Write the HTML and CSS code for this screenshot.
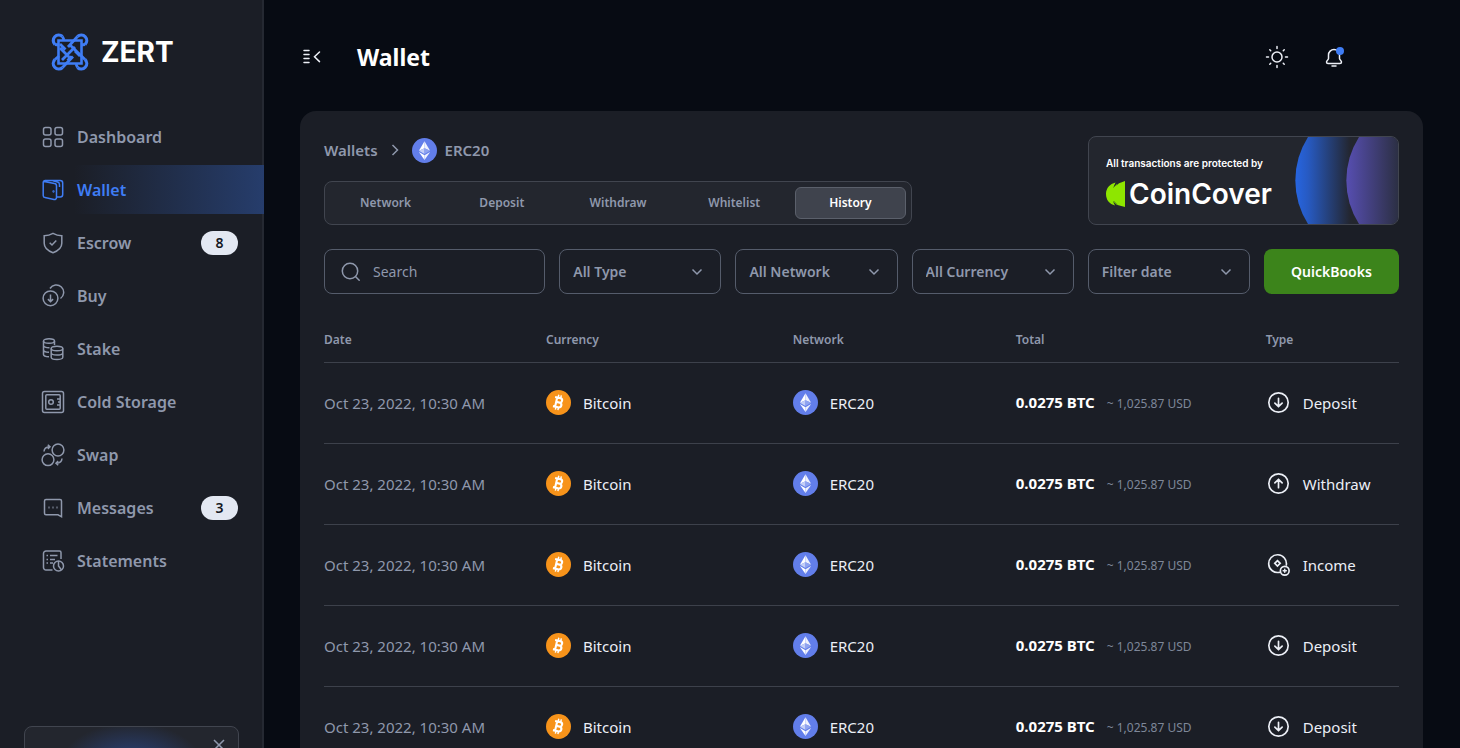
FILE: index.html
```html
<!DOCTYPE html>
<html lang="en">
<head>
<meta charset="utf-8">
<meta name="viewport" content="width=device-width, initial-scale=1">
<title>Zert – Wallet</title>
<link rel="stylesheet" href="styles.css">
</head>
<body>
<svg class="defs" aria-hidden="true">
  <defs>
    <symbol id="eth" viewBox="0 0 24 24">
      <circle cx="12" cy="12" r="12" fill="#627eea"/>
      <path d="M12 3 6.600 12.200 12 9.800z" fill="#fff"/><path d="M12 3v6.800l5.400 2.400z" fill="#eef1fd"/>
      <path d="M12 9.800 6.600 12.200 12 15.400z" fill="#c3cef7"/><path d="M12 9.800v5.600l5.400-3.200z" fill="#8fa3f0"/>
      <path d="M6.600 13.400 12 21v-4.400z" fill="#fff"/><path d="M12 16.600V21l5.400-7.600z" fill="#eef1fd"/>
    </symbol>
    <symbol id="btc" viewBox="0 0 24 24">
      <circle cx="12" cy="12" r="12" fill="#f7931a"/>
      <g transform="rotate(13 12 12)" fill="none" stroke="#fff">
        <path d="M7.600 7.500h5.200a2.200 2.200 0 0 1 0 4.400H9.800h3.600a2.400 2.400 0 0 1 0 4.700H7.600M9.700 7.500v9" stroke-width="2"/>
        <path d="M10.600 4.700v2.500M13.100 4.700v2.500M10.600 16.800v2.500M13.100 16.800v2.500" stroke-width="1.400"/>
      </g>
    </symbol>
    <symbol id="down" viewBox="0 0 24 24"><circle cx="12" cy="12" r="9.300"/><path d="M12 8v8m-3.500-3.400L12 16l3.500-3.400"/></symbol>
    <symbol id="up" viewBox="0 0 24 24"><circle cx="12" cy="12" r="9.300"/><path d="M12 16V8m-3.500 3.400L12 8l3.500 3.400"/></symbol>
    <symbol id="income" viewBox="0 0 24 24"><path d="M12.800 19.500A8.500 8.500 0 1 1 19.500 12.500"/><path d="m11 8.300 2.600 2.600-2.600 2.600-2.600-2.600z"/><circle cx="18" cy="18" r="4.200"/><path d="M18 16.500v3m-1.500-1.500h3" stroke-width="1.400"/></symbol>
  </defs>
</svg>
<div class="app">
  <aside class="sidebar">
    <a class="brand" href="#">
      <svg class="brand-mark" viewBox="0 0 40 40" aria-hidden="true">
        <path d="M8.500 8.500h23v23h-23z" stroke-width="2.600"/>
        <path d="M12.500 4.500A5.300 5.300 0 1 0 5 12.500M27.500 4.500A5.300 5.300 0 1 1 35 12.500M12.500 35.500A5.300 5.300 0 1 1 5 27.500M27.500 35.500A5.300 5.300 0 1 0 35 27.500" stroke-width="3.200"/>
        <path d="M5 12.500 9 13M12.500 4.500 14 8M27.500 4.500 18 15M35 12.500 31 13M5 27.500 9 24M12.500 35.500 23 24.500M35 27.500 20.500 13.500M27.500 35.500 26 32M10 12l5.500 5.500M10 16l9 9M25 15l-13 13M30 24l-5-5M17.500 28.500l4-4" stroke-width="2.800"/>
      </svg>
      <span>ZERT</span>
    </a>
    <nav class="nav" aria-label="Main">
      <a class="nav-item" href="#"><svg viewBox="0 0 24 24"><rect x="2.500" y="2.500" width="7.500" height="7.500" rx="2"/><rect x="14" y="2.500" width="7.500" height="7.500" rx="2"/><rect x="2.500" y="14" width="7.500" height="7.500" rx="2"/><rect x="14" y="14" width="7.500" height="7.500" rx="2"/></svg>Dashboard</a>
      <a class="nav-item active" href="#" aria-current="page"><svg viewBox="0 0 24 24"><path d="M3 3.400 13.500 5.600a2.400 2.400 0 0 1 2 2.400v11.500a2 2 0 0 1-2.500 2L4 19.600a2 2 0 0 1-1.800-2V4.500a2 2 0 0 1 2-2h15a2.500 2.500 0 0 1 2.500 2.500v11.500a2.500 2.500 0 0 1-2.500 2.500h-3.500M12 2.800l4.500 1.300a2.600 2.600 0 0 1 2 2.400V9"/><circle cx="12.500" cy="13.500" r=".4"/></svg>Wallet</a>
      <a class="nav-item" href="#"><svg viewBox="0 0 24 24"><path d="M12 2.400c3 1.700 5.700 2.300 8.800 2.400v7.500c0 4.700-3.300 7.500-8.800 9.400-5.500-1.900-8.800-4.700-8.800-9.400V4.800C6.300 4.700 9 4.100 12 2.400z"/><path d="m8.700 11.700 2.300 2.300 4.300-4.500"/></svg>Escrow<span class="badge">8</span></a>
      <a class="nav-item" href="#"><svg viewBox="0 0 24 24"><circle cx="9.500" cy="14.300" r="7.400"/><path d="M9.500 10.500v7m-2.600-2.400 2.600 2.600 2.600-2.600M9 4.500a7.400 7.400 0 1 1 10.500 10"/></svg>Buy</a>
      <a class="nav-item" href="#"><svg viewBox="0 0 24 24"><ellipse cx="8" cy="4" rx="5.500" ry="2.300"/><path d="M2.500 4v13.500c0 1.200 2.200 2.200 5.500 2.300M13.500 4v4M2.500 8.500c0 1.300 2.500 2.300 6 2.200M2.500 13c0 1.300 2.300 2.200 5.500 2.300"/><ellipse cx="16" cy="11.500" rx="5.800" ry="2.300"/><path d="M10.200 11.500v8.700c0 3 11.600 3 11.600 0v-8.700M10.200 15.800c0 3 11.600 3 11.600 0"/></svg>Stake</a>
      <a class="nav-item" href="#"><svg viewBox="0 0 24 24"><rect x="1.500" y="1.500" width="21" height="21" rx="2"/><rect x="4.800" y="4.800" width="14.400" height="14.400" rx="1"/><circle cx="10" cy="12" r="2.300"/><path d="M16 9h3M17 12h2M16 15h3"/></svg>Cold Storage</a>
      <a class="nav-item" href="#"><svg viewBox="0 0 24 24"><circle cx="17" cy="7" r="5.900"/><circle cx="7" cy="16.700" r="5.900"/><path d="M3 8.500C3.200 5.500 5 4 8.500 3.800M6.800 1.700 9 3.800 6.800 5.900M21 15.500c-.2 3-2 4.500-5.500 4.700m1.700-2.100-2.200 2.100 2.200 2.100"/></svg>Swap</a>
      <a class="nav-item" href="#"><svg viewBox="0 0 24 24"><path d="M3.500 5a1.500 1.500 0 0 1 1.500-1.500h14a1.500 1.500 0 0 1 1.500 1.500v15.800l-3.500-2H5a1.500 1.500 0 0 1-1.500-1.500z"/><path d="M7.500 11.500h1M11.500 11.500h1M15.500 11.500h1" stroke-width="1.800"/></svg>Messages<span class="badge">3</span></a>
      <a class="nav-item" href="#"><svg viewBox="0 0 24 24"><path d="M11.500 21H5a2.500 2.500 0 0 1-2.500-2.500v-14a2.500 2.500 0 0 1 2.500-2.500h13.500a1.500 1.500 0 0 1 1.500 1.500V10M5.500 6.500h1.500M9 6.500h7.500M5.500 10.500h1.500M9 10.500h5M5.500 14h1.500M9 14h3"/><circle cx="17.500" cy="17" r="5"/><path d="M17.500 12v5l3 4"/></svg>Statements</a>
    </nav>
    <section class="promo" aria-label="Announcement">
      <button class="promo-close" type="button" aria-label="Close"><svg viewBox="0 0 12 12"><path d="m1 1 10 10M11 1 1 11"/></svg></button>
    </section>
  </aside>

  <main class="main">
    <header class="topbar">
      <button class="icon-button" type="button" aria-label="Collapse menu"><svg class="menu-icon" viewBox="0 0 18 16"><path d="M1 1.500h5M1 5.500h5M1 9.500h5M1 13.500h5M16.500 3l-5 4.800 5 4.800"/></svg></button>
      <h1>Wallet</h1>
      <div class="actions">
        <button class="icon-button" type="button" aria-label="Light theme"><svg class="action-icon" viewBox="0 0 24 24"><circle cx="12" cy="12" r="5"/><path d="M12 1.500v2M12 20.500v2M1.500 12h2M20.500 12h2M4.800 4.800l.9.900M18.300 18.300l.9.900M4.800 19.200l.9-.9M18.300 5.700l.9-.9"/></svg></button>
        <button class="icon-button" type="button" aria-label="Notifications"><svg class="action-icon" viewBox="0 0 24 24"><path d="M12 4.500a5.500 5.500 0 0 0-5.500 5.500v3.500c0 1.500-2 2-2 3.500 0 1 .5 1.500 1.500 1.500h12c1 0 1.500-.5 1.500-1.500 0-1.500-2-2-2-3.500V10A5.500 5.500 0 0 0 12 4.500zM10 21h4"/><circle cx="18" cy="6" r="4" fill="#3f7df5" stroke="none"/></svg></button>
      </div>
    </header>

    <section class="card">
      <div class="card-head">
        <div class="card-nav">
          <nav class="crumbs" aria-label="Breadcrumb">
            <a href="#">Wallets</a>
            <svg class="crumb-arrow" viewBox="0 0 8 12"><path d="m1.500 1 5 5-5 5"/></svg>
            <a class="crumb-current" href="#"><svg class="coin"><use href="#eth"/></svg>ERC20</a>
          </nav>
          <div class="tabs" role="tablist">
            <button type="button" role="tab">Network</button>
            <button type="button" role="tab">Deposit</button>
            <button type="button" role="tab">Withdraw</button>
            <button type="button" role="tab">Whitelist</button>
            <button type="button" role="tab" class="selected" aria-selected="true">History</button>
          </div>
        </div>
        <aside class="cover">
          <div class="cover-text">
            <p>All transactions are protected by</p>
            <div class="cover-brand">
              <svg viewBox="0 0 19 26" aria-hidden="true"><path d="M9.500 1.500C4 3 0 7 0 13s3.500 10 9 11.500l-2-4 3.500 3 1 .5L19 26V0l-6 2.200-1.500 1.300-4 2.500z" fill="#8ee600"/><path d="M11 3 7.500 6.500M11 23.500 7.500 20" stroke="#4c8312"/></svg>
              <strong>CoinCover</strong>
            </div>
          </div>
          <svg class="cover-art" viewBox="0 0 104 87" aria-hidden="true">
            <defs>
              <linearGradient id="blue" gradientUnits="userSpaceOnUse" x1="0" x2="56" y1="0" y2="0"><stop offset="0" stop-color="#2666e4"/><stop offset=".25" stop-color="#275ac2"/><stop offset="1" stop-color="#232630"/></linearGradient>
              <linearGradient id="violet" gradientUnits="userSpaceOnUse" x1="51" x2="105" y1="0" y2="0"><stop offset="0" stop-color="#584fb4"/><stop offset="1" stop-color="#2b2f42"/></linearGradient>
            </defs>
            <path d="M14 0a81 81 0 0 0 0 87h44V0z" fill="url(#blue)"/>
            <path d="M65 0a81 81 0 0 0 0 87h40V0z" fill="url(#violet)"/>
          </svg>
        </aside>
      </div>

      <form class="filters">
        <label class="search"><svg viewBox="0 0 20 20"><circle cx="9" cy="9" r="7.700"/><path d="m14.700 14.700 3.500 3.500"/></svg><input type="search" placeholder="Search" aria-label="Search"></label>
        <label class="pick"><select aria-label="Type"><option>All Type</option></select><svg viewBox="0 0 12 8"><path d="m1.500 1.500 4.500 4.500 4.500-4.500"/></svg></label>
        <label class="pick"><select aria-label="Network"><option>All Network</option></select><svg viewBox="0 0 12 8"><path d="m1.500 1.500 4.500 4.500 4.500-4.500"/></svg></label>
        <label class="pick"><select aria-label="Currency"><option>All Currency</option></select><svg viewBox="0 0 12 8"><path d="m1.500 1.500 4.500 4.500 4.500-4.500"/></svg></label>
        <label class="pick"><select aria-label="Date"><option>Filter date</option></select><svg viewBox="0 0 12 8"><path d="m1.500 1.500 4.500 4.500 4.500-4.500"/></svg></label>
        <button class="primary" type="button">QuickBooks</button>
      </form>

      <table class="history">
        <colgroup><col class="c-date"><col class="c-currency"><col class="c-network"><col class="c-total"><col></colgroup>
        <thead><tr><th scope="col">Date</th><th scope="col">Currency</th><th scope="col">Network</th><th scope="col">Total</th><th scope="col">Type</th></tr></thead>
        <tbody>
          <tr><td class="date">Oct 23, 2022, 10:30 AM</td><td><span class="cell"><svg class="coin"><use href="#btc"/></svg>Bitcoin</span></td><td><span class="cell"><svg class="coin"><use href="#eth"/></svg>ERC20</span></td><td><span class="total"><b>0.0275 BTC</b><small>~ 1,025.87 USD</small></span></td><td><span class="cell"><svg class="kind"><use href="#down"/></svg>Deposit</span></td></tr>
          <tr><td class="date">Oct 23, 2022, 10:30 AM</td><td><span class="cell"><svg class="coin"><use href="#btc"/></svg>Bitcoin</span></td><td><span class="cell"><svg class="coin"><use href="#eth"/></svg>ERC20</span></td><td><span class="total"><b>0.0275 BTC</b><small>~ 1,025.87 USD</small></span></td><td><span class="cell"><svg class="kind"><use href="#up"/></svg>Withdraw</span></td></tr>
          <tr><td class="date">Oct 23, 2022, 10:30 AM</td><td><span class="cell"><svg class="coin"><use href="#btc"/></svg>Bitcoin</span></td><td><span class="cell"><svg class="coin"><use href="#eth"/></svg>ERC20</span></td><td><span class="total"><b>0.0275 BTC</b><small>~ 1,025.87 USD</small></span></td><td><span class="cell"><svg class="kind"><use href="#income"/></svg>Income</span></td></tr>
          <tr><td class="date">Oct 23, 2022, 10:30 AM</td><td><span class="cell"><svg class="coin"><use href="#btc"/></svg>Bitcoin</span></td><td><span class="cell"><svg class="coin"><use href="#eth"/></svg>ERC20</span></td><td><span class="total"><b>0.0275 BTC</b><small>~ 1,025.87 USD</small></span></td><td><span class="cell"><svg class="kind"><use href="#down"/></svg>Deposit</span></td></tr>
          <tr><td class="date">Oct 23, 2022, 10:30 AM</td><td><span class="cell"><svg class="coin"><use href="#btc"/></svg>Bitcoin</span></td><td><span class="cell"><svg class="coin"><use href="#eth"/></svg>ERC20</span></td><td><span class="total"><b>0.0275 BTC</b><small>~ 1,025.87 USD</small></span></td><td><span class="cell"><svg class="kind"><use href="#down"/></svg>Deposit</span></td></tr>
        </tbody>
      </table>
    </section>
  </main>
</div>
</body>
</html>
```

FILE: styles.css
```css
:root {
  --bg: #070b13;
  --panel: #1b1e26;
  --raised: #23262e;
  --line: #41454f;
  --muted: #8f98ac;
  --text: #eceff6;
  --blue: #3f7df5;
}
* { box-sizing: border-box; }
body {
  margin: 0;
  background: var(--bg);
  color: var(--text);
  font: 400 16px/24px "Noto Sans", sans-serif;
}
a { color: inherit; text-decoration: none; }
button, input, select { font: inherit; color: inherit; }
button { cursor: pointer; }
svg { fill: none; stroke: currentColor; flex: none; }
.defs { position: absolute; width: 0; height: 0; }

.app { display: flex; height: 100vh; }

.sidebar {
  flex: none;
  width: 264px;
  overflow-y: auto;
  scrollbar-width: none;
  background: var(--panel);
  box-shadow: inset -2px 0 #252932;
}
.brand {
  display: flex;
  align-items: center;
  gap: 11px;
  padding: 32px 0 0 50px;
  font: 700 28px/40px Inter, sans-serif;
  color: #fff;
}
.brand-mark { width: 40px; height: 40px; color: var(--blue); }
.nav {
  display: flex;
  flex-direction: column;
  gap: 4px;
  margin-top: 40px;
}
.nav-item {
  display: flex;
  align-items: center;
  gap: 12px;
  height: 49px;
  padding: 0 26px 0 41px;
  color: var(--muted);
  font-weight: 600;
}
.nav-item svg { width: 24px; height: 24px; stroke-width: 1.5; }
.nav-item.active {
  color: var(--blue);
  background: linear-gradient(90deg, transparent 28%, #263d6c);
}
.badge {
  margin-left: auto;
  width: 37px;
  border-radius: 12px;
  background: #e3e8f2;
  color: #14171f;
  font-size: 14px;
  text-align: center;
}
.promo {
  display: flex;
  justify-content: flex-end;
  height: 160px;
  margin: 141px 25px 24px 24px;
  padding: 12px 13px;
  border: 1px solid var(--line);
  border-radius: 8px;
  background: radial-gradient(72px 44px at 50% 40px, #2b4684, var(--raised));
}
.promo-close {
  width: 12px;
  height: 12px;
  padding: 0;
  border: 0;
  background: none;
  color: var(--muted);
}
.promo-close svg { display: block; stroke-width: 1.5; }

.main {
  flex: 1;
  min-width: 0;
  padding: 0 37px 0 36px;
  overflow-y: auto;
  scrollbar-width: none;
}
.topbar { display: flex; align-items: center; height: 111px; padding: 2px 77px 0 3px; }
.topbar h1 { margin: 0 0 0 36px; font-size: 23px; line-height: 32px; font-weight: 700; color: #fff; }
.icon-button { display: block; padding: 0; border: 0; background: none; }
.icon-button svg { display: block; stroke-width: 1.5; stroke-linecap: round; }
.menu-icon { width: 18px; height: 16px; }
.action-icon { width: 24px; height: 24px; }
.actions { display: flex; gap: 33px; margin-left: auto; }

.card { padding: 25px 24px; border-radius: 16px; background: var(--panel); }
.card-head { display: flex; justify-content: space-between; gap: 24px; }
.card-nav { display: flex; flex-direction: column; justify-content: space-between; flex: 0 1 588px; }
.crumbs { display: flex; align-items: center; height: 28px; color: var(--muted); font-size: 15px; font-weight: 600; }
.crumb-arrow { width: 8px; height: 12px; margin: 0 13px; stroke-width: 1.5; }
.crumb-current { display: flex; align-items: center; gap: 8px; }
.coin { width: 25px; height: 25px; stroke: none; }
.tabs {
  display: flex;
  gap: 5px;
  padding: 5px;
  border: 1px solid var(--line);
  border-radius: 8px;
  background: var(--raised);
}
.tabs button {
  flex: 1;
  height: 32px;
  padding: 0;
  border: 1px solid transparent;
  border-radius: 6px;
  background: none;
  color: var(--muted);
  font-size: 12px;
  line-height: 16px;
  font-weight: 600;
}
.tabs .selected { background: #3f434d; border-color: #5b606b; color: #fff; }

.cover {
  display: flex;
  justify-content: space-between;
  flex: 0 1 311px;
  overflow: hidden;
  border: 1px solid var(--line);
  border-radius: 8px;
  background: var(--raised);
}
.cover-text { padding: 18px 0 0 17px; color: #fff; font-family: Inter, sans-serif; }
.cover-text p { margin: 0; font-size: 10px; line-height: 16px; font-weight: 600; }
.cover-brand { display: flex; align-items: center; gap: 4px; margin-top: 7px; }
.cover-brand svg { width: 19px; height: 26px; stroke: none; }
.cover-brand strong { font-size: 28px; line-height: 32px; font-weight: 600; }
.cover-art { width: 104px; height: 87px; stroke: none; }

.filters {
  display: grid;
  grid-template-columns: 221fr repeat(4, 162fr) 135fr;
  gap: 14px;
  margin-top: 24px;
  font-size: 14px;
}
.search, .pick {
  display: flex;
  align-items: center;
  height: 45px;
  border: 1px solid #555c6b;
  border-radius: 8px;
  color: var(--muted);
}
.search { gap: 12px; padding: 0 16px; }
.search svg { width: 20px; height: 20px; stroke-width: 1.5; stroke-linecap: round; }
.search input { flex: 1; width: 100%; min-width: 0; padding: 0; border: 0; outline: 0; background: none; appearance: none; }
.search input::placeholder { color: var(--muted); opacity: 1; }
.pick { padding: 0 17px 0 13px; }
.pick select { flex: 1; min-width: 0; height: 100%; padding: 0; border: 0; outline: 0; background: none; appearance: none; font-weight: 600; }
.pick svg { width: 12px; height: 8px; stroke-width: 1.5; }
.primary { height: 45px; padding: 0; border: 0; border-radius: 8px; background: #3c841b; color: #fff; font-weight: 600; }

.history { width: 100%; margin-top: 25px; border-collapse: collapse; table-layout: fixed; font-size: 15px; white-space: nowrap; }
.c-date { width: 20.65%; }
.c-currency { width: 22.95%; }
.c-network { width: 20.75%; }
.c-total { width: 23.25%; }
.history th, .history td { padding: 0; text-align: left; border-bottom: 1px solid #3d414b; }
.history th { height: 43px; color: var(--muted); font-size: 12px; line-height: 16px; font-weight: 600; }
.history td { height: 81px; }
.history .date { color: var(--muted); }
.cell { display: flex; align-items: center; gap: 12px; }
.kind { width: 25px; height: 25px; stroke-width: 1.6; stroke-linecap: round; }
.total { display: flex; align-items: baseline; gap: 12px; }
.total b { font-weight: 700; color: #fff; }
.total small { font-size: 12px; color: #7e8799; }
```
